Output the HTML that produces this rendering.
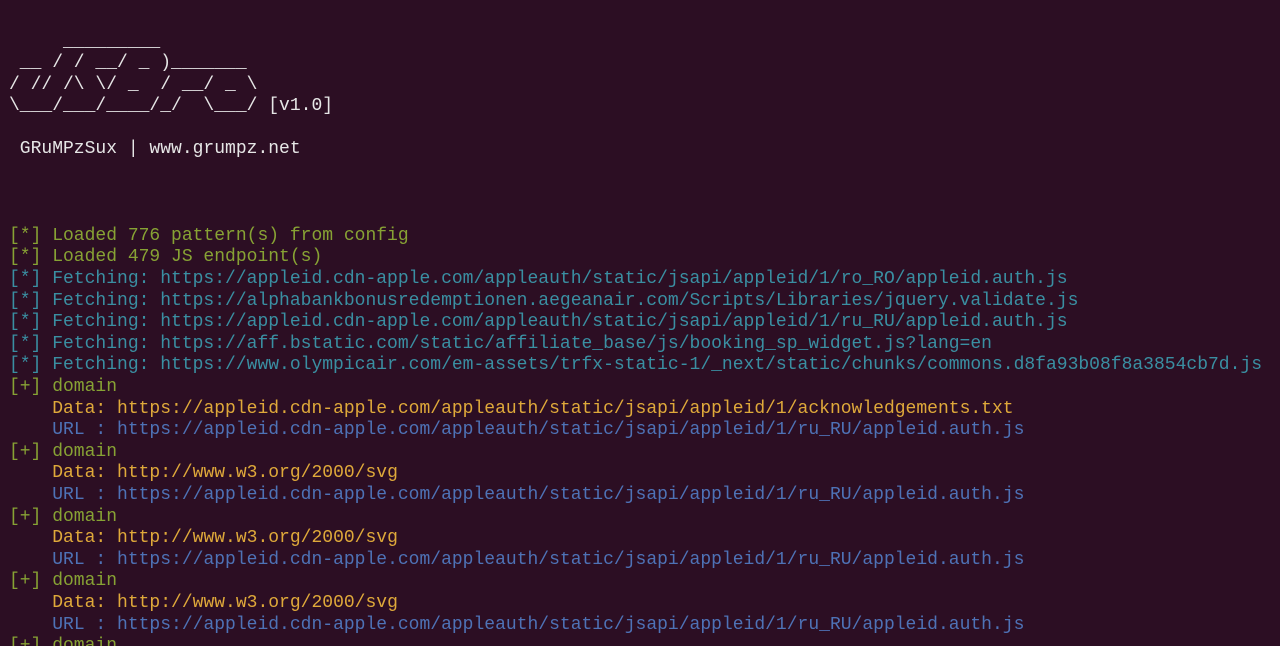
<!DOCTYPE html>
<html><head><meta charset="utf-8"><style>
html,body{margin:0;padding:0;background:#2c0e23;width:1280px;height:646px;overflow:hidden}
pre{margin:0;padding:31.5px 0 0 9px;font-family:"Liberation Mono",monospace;font-size:18px;line-height:21.6px;color:#e6e6e6;white-space:pre}
.g{color:#87a234}.c{color:#3a8fa2}.y{color:#dfa93a}.b{color:#4e72b6}
</style></head><body><pre>     _________
 __ / / __/ _ )_______
/ // /\ \/ _  / __/ _ \
\___/___/____/_/  \___/ [v1.0]

 GRuMPzSux | www.grumpz.net



<span class="g">[*] Loaded 776 pattern(s) from config</span>
<span class="g">[*] Loaded 479 JS endpoint(s)</span>
<span class="c">[*] Fetching: https://appleid.cdn-apple.com/appleauth/static/jsapi/appleid/1/ro_RO/appleid.auth.js</span>
<span class="c">[*] Fetching: https://alphabankbonusredemptionen.aegeanair.com/Scripts/Libraries/jquery.validate.js</span>
<span class="c">[*] Fetching: https://appleid.cdn-apple.com/appleauth/static/jsapi/appleid/1/ru_RU/appleid.auth.js</span>
<span class="c">[*] Fetching: https://aff.bstatic.com/static/affiliate_base/js/booking_sp_widget.js?lang=en</span>
<span class="c">[*] Fetching: https://www.olympicair.com/em-assets/trfx-static-1/_next/static/chunks/commons.d8fa93b08f8a3854cb7d.js</span>
<span class="g">[+] domain</span>
    <span class="y">Data: https://appleid.cdn-apple.com/appleauth/static/jsapi/appleid/1/acknowledgements.txt</span>
    <span class="b">URL : https://appleid.cdn-apple.com/appleauth/static/jsapi/appleid/1/ru_RU/appleid.auth.js</span>
<span class="g">[+] domain</span>
    <span class="y">Data: http://www.w3.org/2000/svg</span>
    <span class="b">URL : https://appleid.cdn-apple.com/appleauth/static/jsapi/appleid/1/ru_RU/appleid.auth.js</span>
<span class="g">[+] domain</span>
    <span class="y">Data: http://www.w3.org/2000/svg</span>
    <span class="b">URL : https://appleid.cdn-apple.com/appleauth/static/jsapi/appleid/1/ru_RU/appleid.auth.js</span>
<span class="g">[+] domain</span>
    <span class="y">Data: http://www.w3.org/2000/svg</span>
    <span class="b">URL : https://appleid.cdn-apple.com/appleauth/static/jsapi/appleid/1/ru_RU/appleid.auth.js</span>
<span class="g">[+] domain</span>
</pre></body></html>
